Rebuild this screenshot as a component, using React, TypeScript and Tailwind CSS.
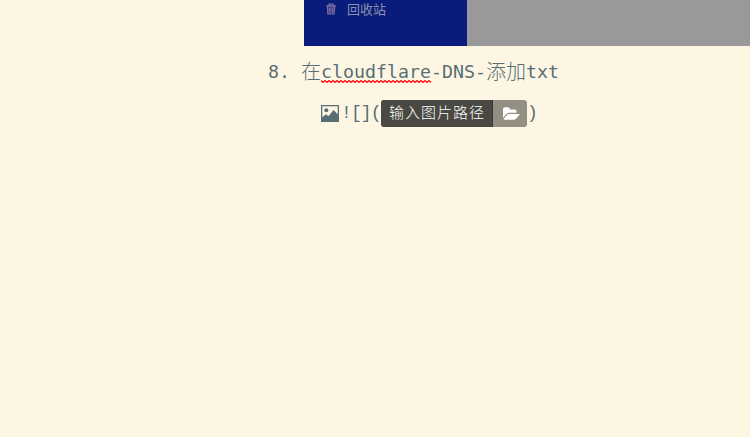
import React from "react";

function TrashIcon() {
  return (
    <svg viewBox="0 0 12 12" className="h-3 w-3 shrink-0" fill="none" stroke="#77719f" strokeWidth="1.2">
      <path fill="#4b3c86" d="M2.3 3l.6 8h6.2l.6-8z" />
      <path d="M1 3h10M4 3V1.2h4V3M4.7 5v4.2M7.3 5v4.2" />
    </svg>
  );
}

function ImageIcon() {
  return (
    <svg viewBox="0 0 18 17" className="h-[17px] w-[18px] shrink-0" fill="#586e75">
      <path fillRule="evenodd" d="M0 0h18v17H0zM1.3 1.3v11L5 9.2l2.4 2.1L12.6 5l4.1 4.2V1.3z" />
      <circle cx="5.3" cy="5.2" r="2" />
    </svg>
  );
}

function FolderOpenIcon() {
  return (
    <svg viewBox="0 0 1920 1792" className="h-4 w-[17px]" fill="#fff">
      <path d="M1879 952q0 31-31 66l-336 396q-43 51-120.5 86.5t-143.5 35.5h-1088q-34 0-60.5-13t-26.5-43q0-31 31-66l336-396q43-51 120.5-86.5t143.5-35.5h1088q34 0 60.5 13t26.5 43zm-343-344v160h-832q-94 0-197 47.5t-164 119.5l-337 396-5 6q0-4-.5-12.5t-.5-12.5v-960q0-92 66-158t158-66h320q92 0 158 66t66 158v32h544q92 0 158 66t66 158z" />
    </svg>
  );
}

/* Red squiggle marking a misspelled word. */
function Squiggle() {
  return (
    <svg className="absolute left-0 top-[23px] h-[3px] w-full" fill="none" stroke="#ff0000" strokeWidth="1.3">
      <defs>
        <pattern id="squiggle" width="4" height="3" patternUnits="userSpaceOnUse">
          <path d="M-1 1.5L0 .7L2 2.3L4 .7L5 1.5" />
        </pattern>
      </defs>
      <rect width="100%" height="3" fill="url(#squiggle)" stroke="none" />
    </svg>
  );
}

export default function App() {
  return (
    <main className="h-[437px] w-[750px] overflow-hidden bg-[#fdf6e3] text-[#586e75] [font-family:'DejaVu_Sans_Mono','Noto_Sans_CJK_SC',monospace]">
      <div className="ml-[304px] flex h-[46px] bg-[#999999]">
        <div className="flex h-full w-[163px] items-start bg-[#091b7b] pl-[21px] pt-[3px]">
          <TrashIcon />
          <span className="ml-[10px] -mt-[3px] text-[13px] leading-[18px] text-[#8d93ac] [font-family:'Noto_Sans_CJK_SC',sans-serif]">回收站</span>
        </div>
      </div>
      <div className="ml-[268px] mt-[11px] flex h-[30px] items-center whitespace-pre text-[18.27px] leading-[30px]">
        <span className="w-[33px]">8.</span>
        <span className="w-5 text-[20px] font-light">在</span>
        <span className="relative">
          cloudflare
          <Squiggle />
        </span>
        <span>-DNS-</span>
        <span className="w-10 text-[20px] font-light">添加</span>
        <span>txt</span>
      </div>
      <div className="ml-[321px] mt-[13px] flex h-[27px] items-center text-[18px] tracking-[-0.9px] [font-family:'Liberation_Mono','Noto_Sans_CJK_SC',monospace]">
        <ImageIcon />
        <span className="ml-[2px] w-10">![](</span>
        <div className="flex h-[27px] w-[146px] overflow-hidden rounded-[3px] bg-[#938f82] text-white">
          <span className="w-28 whitespace-nowrap border-r border-[#3a3834] bg-[#4a4842] pl-2 pt-px text-[15px] font-light leading-[28px] tracking-[1px]">输入图片路径</span>
          <span className="flex flex-1 items-center justify-center pl-[3px]">
            <FolderOpenIcon />
          </span>
        </div>
        <span>)</span>
      </div>
    </main>
  );
}
